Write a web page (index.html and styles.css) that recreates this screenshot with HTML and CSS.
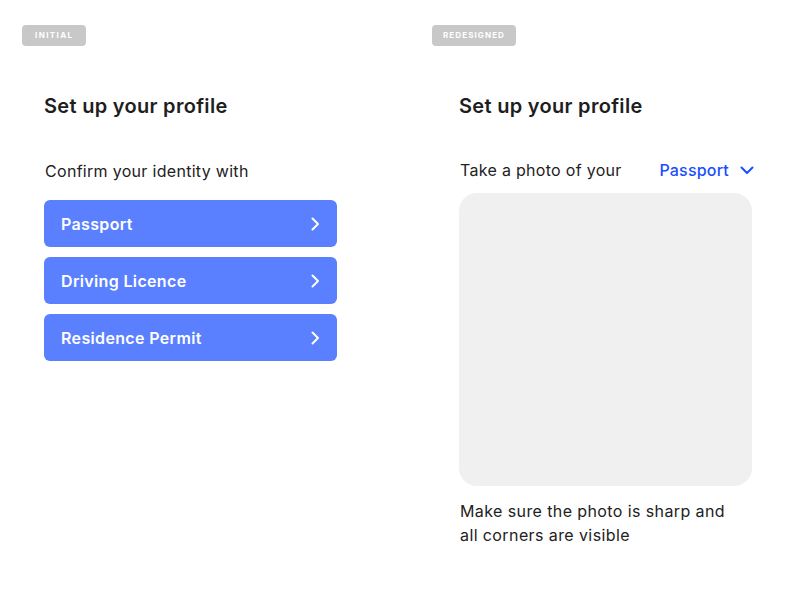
FILE: index.html
```html
<!DOCTYPE html>
<html lang="en">
<head>
<meta charset="utf-8">
<title>Set up your profile</title>
<link rel="stylesheet" href="styles.css">
</head>
<body>
<main class="page">
  <section class="panel panel-initial">
    <span class="badge">INITIAL</span>
    <div class="content">
      <h1 class="title">Set up your profile</h1>
      <p class="lead">Confirm your identity with</p>
      <ul class="options">
        <li class="option"><span>Passport</span>
          <svg class="chev" width="10" height="14" viewBox="0 0 10 14"><path d="M2.5 1.5 8 7l-5.5 5.5" fill="none" stroke="#fff" stroke-width="2" stroke-linecap="round" stroke-linejoin="round"/></svg></li>
        <li class="option"><span>Driving Licence</span>
          <svg class="chev" width="10" height="14" viewBox="0 0 10 14"><path d="M2.5 1.5 8 7l-5.5 5.5" fill="none" stroke="#fff" stroke-width="2" stroke-linecap="round" stroke-linejoin="round"/></svg></li>
        <li class="option"><span>Residence Permit</span>
          <svg class="chev" width="10" height="14" viewBox="0 0 10 14"><path d="M2.5 1.5 8 7l-5.5 5.5" fill="none" stroke="#fff" stroke-width="2" stroke-linecap="round" stroke-linejoin="round"/></svg></li>
      </ul>
    </div>
  </section>
  <section class="panel panel-redesigned">
    <span class="badge">REDESIGNED</span>
    <div class="content content-right">
      <h1 class="title">Set up your profile</h1>
      <div class="photo-row">
        <span class="lead">Take a photo of your</span>
        <span class="doc-select">Passport
          <svg width="14" height="10" viewBox="0 0 14 10"><path d="M1.5 2.5 7 8l5.5-5.5" fill="none" stroke="#1a4dff" stroke-width="2" stroke-linecap="round" stroke-linejoin="round"/></svg>
        </span>
      </div>
      <div class="photo-box"></div>
      <p class="hint">Make sure the photo is sharp and<br>all corners are visible</p>
    </div>
  </section>
</main>
</body>
</html>
```
FILE: styles.css
```css
* { box-sizing: border-box; }
html, body { margin: 0; padding: 0; background: #fff; }
body {
  font-family: Inter, "Liberation Sans", sans-serif;
  color: #222;
  width: 800px;
  height: 600px;
  overflow: hidden;
}
.page {
  display: flex;
}
.panel {
  width: 410px;
  padding: 25px 0 0 22px;
  display: flex;
  flex-direction: column;
  align-items: flex-start;
}
.panel-redesigned {
  width: 390px;
}
.badge {
  display: block;
  height: 21px;
  line-height: 21px;
  background: #c8c8c8;
  color: #fff;
  border-radius: 4px;
  font-size: 8px;
  font-weight: 700;
}
.panel-initial .badge {
  padding: 0 13px 0 13px;
  letter-spacing: 1.4px;
}
.panel-redesigned .badge {
  padding: 0 11px 0 11px;
  letter-spacing: 1.1px;
}
.content {
  padding-left: 22px;
  width: 315px;
}
.content-right {
  padding-left: 27px;
  width: 320px;
}
.title {
  margin: 48px 0 0;
  font-size: 20px;
  line-height: 24px;
  font-weight: 600;
  letter-spacing: 0.3px;
  color: #1e1e1e;
}
.lead {
  font-size: 16px;
  line-height: 24px;
  letter-spacing: 0.3px;
  color: #222;
}
p.lead {
  margin: 41px 0 0 1px;
}
.options {
  list-style: none;
  margin: 17px 0 0;
  padding: 0;
  display: flex;
  flex-direction: column;
  gap: 10px;
}
.option {
  height: 47px;
  background: #5a7fff;
  border-radius: 6px;
  color: #fff;
  font-size: 16px;
  font-weight: 600;
  letter-spacing: 0.35px;
  display: flex;
  align-items: center;
  justify-content: space-between;
  padding: 0 17px 0 17px;
}
.photo-row {
  margin-top: 40px;
  margin-right: -2px;
  display: flex;
  align-items: center;
  justify-content: space-between;
  height: 24px;
  padding-left: 1px;
}
.doc-select {
  display: flex;
  align-items: center;
  gap: 11px;
  color: #1a4dff;
  font-size: 16px;
  font-weight: 500;
  letter-spacing: 0.2px;
}
.photo-box {
  margin-top: 11px;
  width: 293px;
  height: 293px;
  background: #f0f0f0;
  border-radius: 18px;
}
.hint {
  margin: 13px 0 0 1px;
  font-size: 16px;
  line-height: 24px;
  letter-spacing: 0.4px;
  color: #222;
}
```
